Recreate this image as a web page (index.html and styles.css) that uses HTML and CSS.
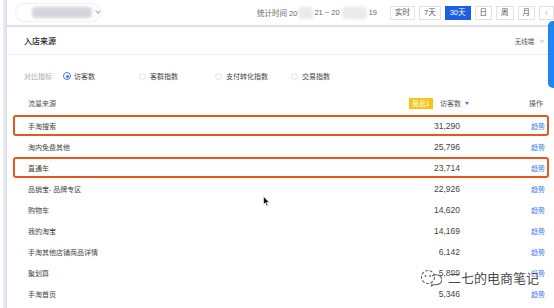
FILE: index.html
```html
<!DOCTYPE html>
<html lang="zh-CN">
<head>
    <meta charset="UTF-8">
    <meta name="viewport" content="width=device-width, initial-scale=1.0">
    <title>入店来源</title>
    <link rel="stylesheet" href="styles.css">
</head>
<body>
    <div class="page">
        <div class="strip"></div>
        <div class="main">
            <!-- 顶部工具条 -->
            <div class="topbar">
                <div class="shop-select">
                    <span class="blurred wide"></span>
                    <span class="chev"></span>
                </div>
                <div class="date">
                    统计时间 20<span class="blurred gap1"></span>21 ~ 20<span class="blurred gap2"></span>19
                </div>
                <div class="btns">
                    <span class="btn">实时</span>
                    <span class="btn">7天</span>
                    <span class="btn on">30天</span>
                    <span class="btn">日</span>
                    <span class="btn">周</span>
                    <span class="btn">月</span>
                    <span class="btn arrow">&lsaquo;</span>
                    <span class="btn arrow">&rsaquo;</span>
                </div>
            </div>

            <div class="panel-head">
                <span class="title">入店来源</span>
                <span class="device">无线端 <span class="chev"></span></span>
            </div>

            <div class="filters">
                <span class="f-label">对比指标</span>
                <label class="opt"><i class="radio checked"></i>访客数</label>
                <label class="opt"><i class="radio"></i>客群指数</label>
                <label class="opt"><i class="radio"></i>支付转化指数</label>
                <label class="opt"><i class="radio"></i>交易指数</label>
            </div>

            <div class="table">
                <div class="row head">
                    <span class="c-name">流量来源</span>
                    <span class="c-val"><em class="tag">竞品1</em>访客数<i class="sort"></i></span>
                    <span class="c-op dark">操作</span>
                </div>
                <div class="row hl"><span class="c-name">手淘搜索</span><span class="c-val num">31,290</span><span class="c-op">趋势</span></div>
                <div class="row"><span class="c-name">淘内免费其他</span><span class="c-val num">25,796</span><span class="c-op">趋势</span></div>
                <div class="row hl"><span class="c-name">直通车</span><span class="c-val num">23,714</span><span class="c-op">趋势</span></div>
                <div class="row"><span class="c-name">品销宝- 品牌专区</span><span class="c-val num">22,926</span><span class="c-op">趋势</span></div>
                <div class="row"><span class="c-name">购物车</span><span class="c-val num">14,620</span><span class="c-op">趋势</span></div>
                <div class="row"><span class="c-name">我的淘宝</span><span class="c-val num">14,169</span><span class="c-op">趋势</span></div>
                <div class="row"><span class="c-name">手淘其他店铺商品详情</span><span class="c-val num">6,142</span><span class="c-op">趋势</span></div>
                <div class="row"><span class="c-name">聚划算</span><span class="c-val num">5,899</span><span class="c-op">趋势</span></div>
                <div class="row"><span class="c-name">手淘首页</span><span class="c-val num">5,346</span><span class="c-op">趋势</span></div>
            </div>
        </div>
    </div>

    <!-- 浮层：右侧蓝色标签、鼠标、水印 -->
    <div class="side-tab"></div>
    <svg class="cursor" width="7" height="11" viewBox="0 0 7 11">
        <path d="M0.5 0.5 L0.5 8.5 L2.4 6.8 L3.8 10 L5 9.4 L3.7 6.3 L6.3 6.2 Z" fill="#111" stroke="#fff" stroke-width="0.6"/>
    </svg>
    <div class="watermark">
        <svg width="22" height="18" viewBox="0 0 22 18">
            <circle cx="8" cy="8" r="6.5" fill="none" stroke="#666" stroke-width="1.1" stroke-dasharray="3 1.5"/>
            <path d="M12 7 a6 5 0 1 1 2 8.5 l-2.5 1.5 l0.5 -2.5" fill="none" stroke="#666" stroke-width="1.1"/>
            <circle cx="5.5" cy="7" r="0.9" fill="#666"/>
            <circle cx="10" cy="7" r="0.9" fill="#666"/>
        </svg>
        <span>二七的电商笔记</span>
    </div>
</body>
</html>
```

FILE: styles.css
```css
* {
    margin: 0;
    padding: 0;
    box-sizing: border-box;
}
body {
    background: #fff;
    font-family: "Liberation Sans", "Noto Sans CJK SC", sans-serif;
    color: #444;
    width: 554px;
    height: 308px;
    overflow: hidden;
}
.page {
    display: flex;
    height: 308px;
    padding-left: 3px;
}
.strip {
    width: 4px;
    background: linear-gradient(to right, #eeeef5, #dcdde8);
}
.main {
    flex: 1;
    min-width: 0;
}

/* 顶部工具条 */
.topbar {
    height: 27px;
    border-bottom: 2px solid #dfe0e6;
    display: flex;
    align-items: center;
    padding-left: 8px;
    font-size: 7.5px;
    color: #666;
    white-space: nowrap;
}
.shop-select {
    width: 86px;
    height: 19px;
    border: 1px solid #f0f0f3;
    border-radius: 10px;
    display: flex;
    align-items: center;
    padding-left: 16px;
}
.blurred {
    display: inline-block;
    background: #e9e9ee;
    filter: blur(1.5px);
    border-radius: 4px;
}
.blurred.wide {
    width: 60px;
    height: 11px;
    background: #d5d5db;
}
.chev {
    display: inline-block;
    width: 4px;
    height: 4px;
    border-right: 1px solid #aaa;
    border-bottom: 1px solid #aaa;
    transform: rotate(45deg);
    margin-left: 4px;
    position: relative;
    top: -2px;
}
.date {
    margin-left: 156px;
    display: flex;
    align-items: center;
}
.blurred.gap1 {
    width: 15px;
    height: 12px;
    margin: 0 1px;
}
.blurred.gap2 {
    width: 25px;
    height: 12px;
    margin: 0 2px;
}
.btns {
    display: flex;
    gap: 4px;
    margin-left: 13px;
}
.btn {
    height: 14px;
    line-height: 12px;
    padding: 0 4px;
    border: 1px solid #e1e1e6;
    color: #555;
    min-width: 15px;
    text-align: center;
}
.btn.on {
    background: #1d5fe0;
    border-color: #1d5fe0;
    color: #fff;
}
.btn.arrow {
    color: #bbb;
    font-size: 10px;
    line-height: 11px;
}

/* 标题 */
.panel-head {
    height: 28px;
    border-bottom: 1px solid #ededf1;
    display: flex;
    align-items: center;
    justify-content: space-between;
    padding: 0 10px 0 17px;
}
.title {
    font-size: 8px;
    color: #222;
    font-weight: 500;
}
.device {
    font-size: 6.5px;
    color: #555;
}
.device .chev {
    border-color: #ccc;
}

/* 对比指标 */
.filters {
    display: flex;
    align-items: center;
    height: 14px;
    margin: 14px 0 8px;
    padding-left: 17px;
    font-size: 7px;
    color: #444;
}
.f-label {
    width: 39px;
    color: #aaa;
}
.opt {
    width: 76px;
    display: flex;
    align-items: center;
}
.radio {
    width: 7px;
    height: 7px;
    border: 1px solid #e2e2e6;
    border-radius: 50%;
    margin-right: 4px;
    display: flex;
    align-items: center;
    justify-content: center;
}
.radio.checked {
    border-color: #3a78f0;
    width: 8px;
    height: 8px;
    margin-right: 3px;
}
.radio.checked::after {
    content: "";
    width: 3px;
    height: 3px;
    background: #3a78f0;
    border-radius: 50%;
}

/* 表格 */
.row {
    height: 21px;
    margin: 0 5px 0 6px;
    border: 2px solid transparent;
    border-radius: 3px;
    display: flex;
    align-items: center;
    padding-left: 13px;
    font-size: 7px;
    color: #444;
}
.row.head {
    height: 24px;
    color: #555;
}
.row.hl {
    border-color: #e4571f;
}
.c-name {
    flex: 1;
}
.c-val {
    width: 80px;
    padding-right: 10px;
    text-align: right;
    display: flex;
    align-items: center;
    justify-content: flex-end;
}
.head .c-val {
    padding-right: 1px;
}
.num {
    font-size: 8.5px;
    color: #444;
}
.c-op {
    width: 16px;
    margin-left: 61px;
    color: #3c7cf2;
}
.c-op.dark {
    color: #555;
    margin-left: 59px;
    width: 18px;
}
.tag {
    font-style: normal;
    background: #f5c518;
    color: #fff;
    padding: 0 3px;
    line-height: 11px;
    margin-right: 7px;
}
.sort {
    width: 0;
    height: 0;
    border-left: 2px solid transparent;
    border-right: 2px solid transparent;
    border-top: 3px solid #3a78f0;
    margin-left: 4px;
}

/* 浮层 */
.side-tab {
    position: absolute;
    left: 548px;
    top: 21px;
    width: 10px;
    height: 67px;
    background: #1e86f2;
    border-radius: 5px 0 0 5px;
}
.cursor {
    position: absolute;
    left: 263px;
    top: 196px;
}
.watermark {
    position: absolute;
    left: 420px;
    top: 268px;
    display: flex;
    align-items: center;
    gap: 6px;
    font-family: "Noto Sans CJK SC", sans-serif;
    font-size: 13px;
    color: #4a4a4a;
    text-shadow: 0 0 2px #fff, 0 0 2px #fff, 0 0 3px #fff;
}
```
